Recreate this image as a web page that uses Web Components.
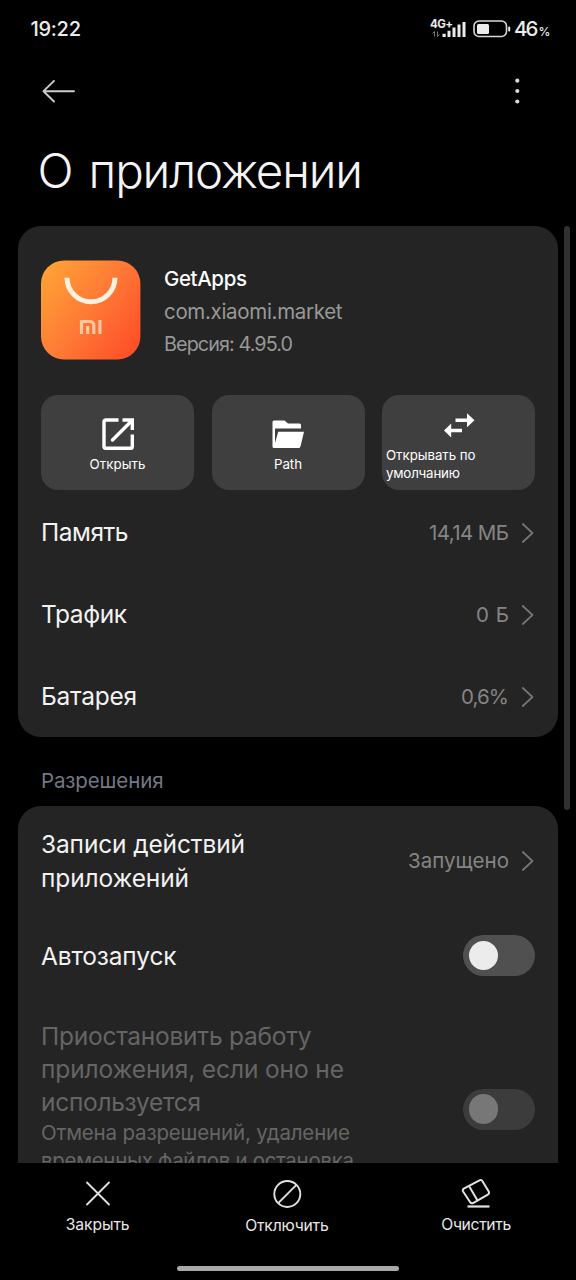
<!DOCTYPE html>
<html lang="ru">
<head>
<meta charset="utf-8">
<title>О приложении</title>
<style>
html,body{margin:0;background:#000;}
body{width:576px;height:1280px;overflow:hidden;font-family:Inter,"Noto Sans",sans-serif;color:#f2f2f2;}
</style>
</head>
<body>
<app-screen></app-screen>
<script>
const define = (name, html, ready) => {
  const tpl = document.createElement('template');
  tpl.innerHTML = html;
  customElements.define(name, class extends HTMLElement {
    connectedCallback() {
      if (this.shadowRoot) return;
      this.attachShadow({mode: 'open'}).append(tpl.content.cloneNode(true));
      if (ready) ready.call(this, this.shadowRoot);
    }
  });
};

// One line of text: s = font size, h = line height, w = advance width the tracking is tuned to.
define('ui-text', `<style>
  :host{display:block;white-space:nowrap;flex:none}
  span{display:inline-block;vertical-align:top}
</style><span><slot></slot></span>`, function (root) {
  const a = n => parseFloat(this.getAttribute(n));
  const span = root.querySelector('span');
  this.style.fontSize = a('s') + 'px';
  this.style.lineHeight = a('h') + 'px';
  this.style.height = a('h') + 'px';
  if (this.hasAttribute('w')) {
    this.style.width = a('w') + 'px';
    const gap = (a('w') - span.getBoundingClientRect().width) / (this.textContent.length - 1);
    span.style.letterSpacing = gap.toFixed(3) + 'px';
  }
});

define('status-bar', `<style>
  :host{display:flex;height:58px;padding:0 27px 0 30.500px;box-sizing:border-box;align-items:center;justify-content:space-between;font-weight:500;color:#ececec}
  .r{display:flex;align-items:center}
  svg{display:block}
  .net{display:grid;width:36px;height:22px;margin-right:7px}
  .net>*{grid-area:1/1}
  .net ui-text{font-weight:700}
  .pct{margin:5px 0 0 0}
</style>
<ui-text s="20" h="58" w="50.500">19:22</ui-text>
<div class="r">
  <div class="net">
    <ui-text s="11.500" h="12" w="23">4G+</ui-text>
    <svg width="36" height="22" viewBox="0 0 36 22" fill="#ececec"><path d="M12.5 15.800h3.200v3.200h-3.200zM17.500 12.800h3v6.200h-3zM22.500 9.500h3v9.500h-3zM27.500 6.500h3v12.500h-3zM32.500 4h3v15h-3z"/><path d="M4.500 18.500v-5l-2 2M7.500 13.500v5l2-2" fill="none" stroke="#777" stroke-width="1"/></svg>
  </div>
  <svg width="41" height="20" viewBox="0 0 41 20"><rect x="1" y="2" width="32.500" height="15.500" rx="5" fill="none" stroke="#d8d8d8" stroke-width="1.600"/><rect x="4" y="5" width="12" height="10" rx="1.500" fill="#ececec"/><rect x="35.200" y="7.500" width="2" height="5" rx="1" fill="#ececec"/></svg>
  <ui-text s="20.500" h="58" w="24.500">46</ui-text>
  <ui-text class="pct" s="12" h="14" w="10.500">%</ui-text>
</div>`);

define('top-bar', `<style>
  :host{display:flex;height:66px;padding:0 55px 0 42px;align-items:center;justify-content:space-between}
  svg{display:block}
</style>
<svg width="34" height="24" viewBox="0 0 34 24" fill="none" stroke="#cfcbcb" stroke-width="1.900" stroke-linecap="round" stroke-linejoin="round"><path d="M32 12.200H1.500M12 1.800L1.500 12.200 12 22.500"/></svg>
<svg width="8" height="28" viewBox="0 0 8 28" fill="#d8d8d8"><circle cx="4.300" cy="3.700" r="2.100"/><circle cx="4.300" cy="14" r="2.100"/><circle cx="4.300" cy="24.500" r="2.100"/></svg>`);

define('app-card', `<style>
  :host{display:block;width:540px;box-sizing:border-box;padding:0 23px;background:#242424;border-radius:23px}
</style><slot></slot>`);

define('app-logo', `<style>:host{display:block;width:100px;height:100px}svg{display:block}</style>
<svg width="100" height="100" viewBox="0 0 100 100">
  <defs><linearGradient id="g" x1="0" y1="0.150" x2="1" y2="0.900"><stop offset="0" stop-color="#ffa136"/><stop offset="0.500" stop-color="#ff7835"/><stop offset="1" stop-color="#ff4c27"/></linearGradient></defs>
  <rect x="0" y="0.500" width="99.400" height="99" rx="23" fill="url(#g)"/>
  <path d="M26 17.800a24 24 0 0 0 48 0" fill="none" stroke="#fff1df" stroke-width="5"/>
  <path d="M40.500 74V61.500H49a3.800 3.800 0 0 1 3.800 3.800V74M46.700 66v8M58.900 60v14" fill="none" stroke="#ffc9a0" stroke-width="3.200"/>
</svg>`);

define('app-header', `<style>
  :host{display:flex;height:169px;padding-top:34px;box-sizing:border-box;gap:23px}
  .t{padding-top:2.500px;color:#989898}
  .n{color:#fff;font-weight:500}
</style>
<app-logo></app-logo>
<div class="t">
  <ui-text class="n" s="20.500" h="33" w="83">GetApps</ui-text>
  <ui-text s="20.500" h="33" w="178.500">com.xiaomi.market</ui-text>
  <ui-text s="19.800" h="32" w="129">Версия: 4.95.0</ui-text>
</div>`);

define('tile-button', `<style>
  :host{display:flex;flex:1;height:95.500px;border-radius:17px;background:#3f3f3f;flex-direction:column;align-items:center;justify-content:center;color:#fff;box-sizing:border-box;padding-top:5px}
  ::slotted(svg){display:block;flex:none}
</style><slot name="icon"></slot><slot></slot>`);

define('ui-chevron', `<style>:host{display:block}svg{display:block}</style>
<svg width="14" height="22" viewBox="0 0 14 22" fill="none" stroke="#747474" stroke-width="1.800" stroke-linecap="round" stroke-linejoin="round"><path d="M1.800 2L11.500 11 1.800 20"/></svg>`);

define('info-row', `<style>
  :host{display:flex;justify-content:space-between;align-items:center}
  .v{display:flex;align-items:center;gap:12px;color:#858585}
</style><div><slot></slot></div><div class="v"><slot name="value"></slot><ui-chevron></ui-chevron></div>`);

define('ui-switch', `<style>
  :host{display:flex;width:72px;height:41px;border-radius:21px;background:#505050;align-items:center;padding-left:5.500px;box-sizing:border-box;flex:none}
  i{width:29.500px;height:29.500px;border-radius:50%;background:#ececec}
  :host([disabled]){background:#3c3c3c}
  :host([disabled]) i{background:#777}
</style><i></i>`);

define('switch-row', `<style>
  :host{display:flex;justify-content:space-between;align-items:center}
  :host([dim]){color:#656565;align-items:flex-start}
</style><div><slot></slot></div><slot name="control"></slot>`);

define('bottom-action', `<style>
  :host{display:flex;flex-direction:column;align-items:center;width:189.300px}
  ::slotted(svg){display:block;flex:none}
</style><slot name="icon"></slot><slot></slot>`);

define('bottom-bar', `<style>
  :host{display:flex;flex-direction:column;height:117.500px;background:#000;color:#e8e8e8}
  .a{display:flex;padding:14.500px 3px 0;height:89px;box-sizing:border-box}
  .h{width:222px;height:5px;border-radius:3px;background:#a9a9a9;margin:14.500px 0 0 177px}
</style>
<div class="a">
  <bottom-action><svg slot="icon" width="34" height="34" viewBox="0 0 34 34" fill="none" stroke="#e2e2e2" stroke-width="1.800" stroke-linecap="round"><path d="M6 5.500l22 22M28 5.500l-22 22"/></svg>
    <ui-text s="15.700" h="27" w="64">Закрыть</ui-text></bottom-action>
  <bottom-action><svg slot="icon" width="34" height="35" viewBox="0 0 34 35" fill="none" stroke="#e2e2e2" stroke-width="1.900"><circle cx="17.300" cy="17" r="13"/><path d="M8.200 26.200l18.200-18.400"/></svg>
    <ui-text s="15.700" h="27" w="83.500">Отключить</ui-text></bottom-action>
  <bottom-action><svg slot="icon" width="34" height="34" viewBox="0 0 34 34" fill="none" stroke="#e2e2e2" stroke-width="2" stroke-linejoin="round"><path d="M5.200 11.400L20.500 3.400Q22.500 2.400 23.500 4.200L29.700 14.500Q30.700 16.500 28.800 17.700L14.500 25.900Q12.500 27 11.200 25.200L4.100 14.500Q3 12.600 5.200 11.400ZM10 9l8.500 14.600"/><path d="M8.500 29.500h22" stroke-width="2.200"/></svg>
    <ui-text s="15.700" h="27" w="70">Очистить</ui-text></bottom-action>
</div>
<div class="h"></div>`);

define('app-screen', `<style>
  :host{display:flex;flex-direction:column;width:576px;height:1280px;background:#000}
  .title{padding:1px 0 0 37.500px;height:101.500px;box-sizing:border-box}
  .title ui-text{font-weight:350;color:#f4f4f4;word-spacing:4px}
  .scroll{display:flex;flex:1;min-height:0;overflow:hidden;padding-left:18px;box-sizing:border-box}
  .list{width:540px;flex:none}
  .bar{width:6px;height:584px;border-radius:3px;background:#303030;margin-left:6px;flex:none}
  .tiles{display:flex;gap:17.500px;margin-bottom:1.500px}
  .left{align-self:flex-start;margin-left:4px}
  .section{padding:26px 0 0 23px;height:69px;box-sizing:border-box;color:#757785}
  .m{height:82.200px}
  app-card.two{height:420px}
</style>
<status-bar></status-bar>
<top-bar></top-bar>
<div class="title"><ui-text s="47.500" h="92" w="325.500">О приложении</ui-text></div>
<div class="scroll">
  <div class="list">
    <app-card style="height:511.500px">
      <app-header></app-header>
      <div class="tiles">
        <tile-button><svg slot="icon" width="34" height="34" viewBox="0 0 34 34" fill="none" stroke="#fff" stroke-width="3.400" style="margin-top:4px"><path d="M17.500 3H4.800Q3 3 3 4.800V29.500Q3 31.300 4.800 31.300H29.500Q31.300 31.300 31.300 29.500V17.500" /><path d="M11.500 23L30 4.500" stroke-linecap="round"/><path d="M21.500 1.300H33V13h-3.400V5.500L28 4.700 21.500 4.700z" fill="#fff" stroke="none"/></svg>
          <ui-text s="13.300" h="26" w="56">Открыть</ui-text></tile-button>
        <tile-button><svg slot="icon" width="34" height="34" viewBox="0 0 34 34" fill="#fff" style="margin-top:4px"><path d="M1.500 29.500V5Q1.500 3.500 3 3.500H13.500L17 6.500H28.500Q30 6.500 30 8V11.500H4V26L7.200 14.800H33L29.500 29.500Q29 31 27.500 31H3Q1.500 31 1.500 29.500Z"/></svg>
          <ui-text s="13.300" h="26" w="28">Path</ui-text></tile-button>
        <tile-button><svg slot="icon" width="34" height="28" viewBox="0 0 34 28" fill="#fff" style="margin-top:3px"><path d="M13.500 7.500H25V2.200L32.500 9.200 25 16.200V11H13.500zM20 17.800H9.200V12.500L2 19.500 9.200 26.500V21.200H20z"/></svg>
          <ui-text class="left" style="margin-top:7px" s="13.300" h="18" w="89.500">Открывать по</ui-text>
          <ui-text class="left" s="13.300" h="18" w="74">умолчанию</ui-text></tile-button>
      </div>
      <info-row class="m"><ui-text s="24.500" h="33" w="87.500">Память</ui-text><ui-text slot="value" s="20.500" h="30" w="80">14,14 МБ</ui-text></info-row>
      <info-row class="m"><ui-text s="24.500" h="33" w="86">Трафик</ui-text><ui-text slot="value" s="20.500" h="30" w="33">0 Б</ui-text></info-row>
      <info-row class="m"><ui-text s="24.500" h="33" w="96">Батарея</ui-text><ui-text slot="value" s="20.500" h="30" w="48">0,6%</ui-text></info-row>
    </app-card>
    <div class="section"><ui-text s="20.500" h="36" w="122.500">Разрешения</ui-text></div>
    <app-card class="two">
      <info-row style="height:109px"><div style="padding-top:2px"><ui-text s="24.500" h="33.200" w="204">Записи действий</ui-text><ui-text s="24.500" h="33.200" w="148">приложений</ui-text></div><ui-text slot="value" s="20.500" h="30" w="101">Запущено</ui-text></info-row>
      <switch-row style="height:81px"><ui-text style="padding-top:2px" s="24.500" h="33" w="135.500">Автозапуск</ui-text><ui-switch slot="control"></ui-switch></switch-row>
      <switch-row dim style="padding-top:23.500px"><ui-text s="24.500" h="33.200" w="270.500">Приостановить работу</ui-text><ui-text s="24.500" h="33.200" w="303">приложения, если оно не</ui-text><ui-text s="24.500" h="33.200" w="160">используется</ui-text><ui-text s="20.500" h="27.500" w="309">Отмена разрешений, удаление</ui-text><ui-text s="20.500" h="27.500" w="313">временных файлов и остановка</ui-text><ui-switch disabled slot="control" style="margin-top:69px"></ui-switch></switch-row>
    </app-card>
  </div>
  <div class="bar"></div>
</div>
<bottom-bar></bottom-bar>`);
</script>
</body>
</html>
